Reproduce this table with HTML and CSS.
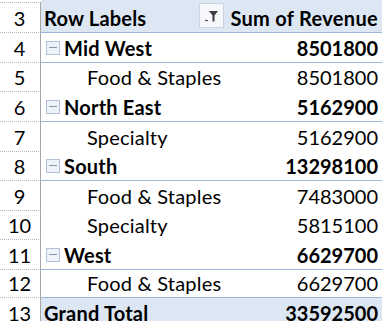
FILE: index.html
```html
<!DOCTYPE html>
<html>
<head>
<meta charset="utf-8">
<link rel="stylesheet" href="styles.css">
</head>
<body>
<div class="sheet">
  <div class="row r30 hdr first">
    <div class="num">3</div>
    <div class="cell">
      <span class="label b">Row Labels</span>
      <span class="filter">
        <svg width="25" height="25" viewBox="0 0 25 25">
          <rect x="0.5" y="0.5" width="24" height="24" fill="#f5f7fb" stroke="#c9d3e4"/>
          <path d="M6 17.5h3" stroke="#555" stroke-width="1.2"/>
          <path d="M10 8h9l-3.5 4.5v6h-2v-6z" fill="#3c3c3c"/>
        </svg>
      </span>
      <span class="value b">Sum of Revenue</span>
    </div>
  </div>
  <div class="row r30 grp">
    <div class="num">4</div>
    <div class="cell"><span class="tog"></span><span class="label b">Mid West</span><span class="value b">8501800</span></div>
  </div>
  <div class="row r29">
    <div class="num">5</div>
    <div class="cell"><span class="label sub">Food &amp; Staples</span><span class="value">8501800</span></div>
  </div>
  <div class="row r30 grp">
    <div class="num">6</div>
    <div class="cell"><span class="tog"></span><span class="label b">North East</span><span class="value b">5162900</span></div>
  </div>
  <div class="row r30">
    <div class="num">7</div>
    <div class="cell"><span class="label sub">Specialty</span><span class="value">5162900</span></div>
  </div>
  <div class="row r29 grp">
    <div class="num">8</div>
    <div class="cell"><span class="tog"></span><span class="label b">South</span><span class="value b">13298100</span></div>
  </div>
  <div class="row r30">
    <div class="num">9</div>
    <div class="cell"><span class="label sub">Food &amp; Staples</span><span class="value">7483000</span></div>
  </div>
  <div class="row r29">
    <div class="num">10</div>
    <div class="cell"><span class="label sub">Specialty</span><span class="value">5815100</span></div>
  </div>
  <div class="row r30 grp">
    <div class="num">11</div>
    <div class="cell"><span class="tog"></span><span class="label b">West</span><span class="value b">6629700</span></div>
  </div>
  <div class="row r28 grp">
    <div class="num">12</div>
    <div class="cell"><span class="label sub">Food &amp; Staples</span><span class="value">6629700</span></div>
  </div>
  <div class="row r30 hdr">
    <div class="num">13</div>
    <div class="cell"><span class="label b">Grand Total</span><span class="value b">33592500</span></div>
  </div>
</div>
</body>
</html>
```
FILE: styles.css
```css
html, body {
  margin: 0;
  padding: 0;
  background: #ffffff;
  overflow: hidden;
}
body {
  font-family: Lato, "Liberation Sans", sans-serif;
  font-size: 20px;
  line-height: 22px;
  color: #000;
}
.sheet {
  display: flex;
  flex-direction: column;
  width: 385px;
}
.row {
  display: flex;
  flex: none;
}
.r30 { height: 30px; }
.r29 { height: 29px; }
.r28 { height: 28px; }
.row.first { height: 33px; }
.num {
  box-sizing: border-box;
  width: 41px;
  flex: none;
  border-right: 1px solid #a6a6a6;
  border-bottom: 1px dotted #b8b8b8;
  display: flex;
  align-items: flex-end;
  justify-content: center;
  padding-bottom: 3px;
  padding-right: 1px;
}
.first .num {
  margin-top: 2px;
  border-top: 1px dotted #b8b8b8;
}
.cell {
  box-sizing: border-box;
  width: 341px;
  flex: none;
  display: flex;
  align-items: flex-end;
  padding: 0 4px 3px 3px;
  border-bottom: 1px solid transparent;
}
.hdr .cell {
  background: #dde7f4;
}
.first .cell {
  border-bottom-color: #9ab6de;
}
.grp .cell {
  border-bottom-color: #9ab6de;
}
.b { font-weight: 700; }
.label {
  white-space: nowrap;
  letter-spacing: 0.2px;
}
.label.sub {
  padding-left: 43px;
}
.value {
  margin-left: auto;
  white-space: nowrap;
}
.tog {
  box-sizing: border-box;
  width: 14px;
  height: 14px;
  margin: 0 4px 4px 2px;
  border: 1px solid #b3c1dd;
  background: #eef2f9;
  position: relative;
  flex: none;
  align-self: flex-end;
}
.tog::after {
  content: "";
  position: absolute;
  left: 2px;
  right: 2px;
  top: 5px;
  height: 1px;
  background: #8a93a8;
}
.filter {
  margin-left: auto;
  margin-right: 6px;
  align-self: center;
  display: flex;
  height: 25px;
  margin-top: 2px;
}
.filter + .value {
  margin-left: 0;
  letter-spacing: 0.3px;
}
```
